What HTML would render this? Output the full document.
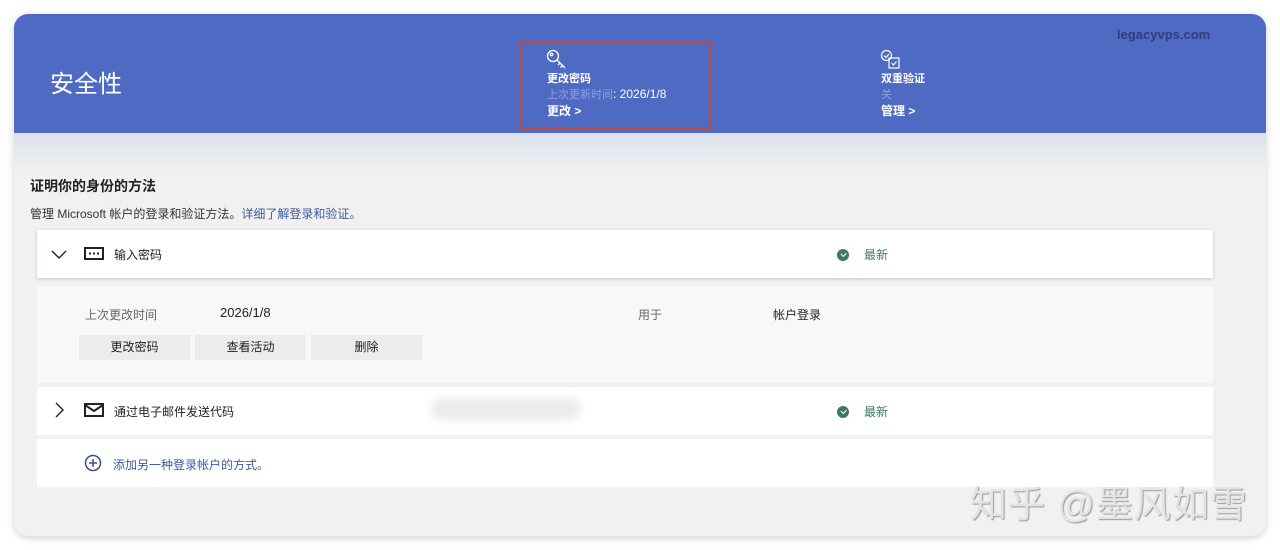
<!DOCTYPE html>
<html><head><meta charset="utf-8"><style>
*{margin:0;padding:0;box-sizing:border-box}
body{width:1280px;height:550px;background:#fff;font-family:"Liberation Sans","Noto Sans CJK SC",sans-serif;position:relative;overflow:hidden;color:#222}
.a{position:absolute;white-space:nowrap}
.card{position:absolute;left:14px;top:14px;width:1252px;height:522px;border-radius:14px;background:#f2f1f0;box-shadow:0 2px 8px rgba(0,0,0,.18);overflow:hidden}
.hdr{position:absolute;left:0;top:0;width:1252px;height:119px;background:#4f6ac3}
.grad{position:absolute;left:0;top:119px;width:1252px;height:40px;background:linear-gradient(#dde1ee,#f2f1f0)}
.w{position:absolute;background:#fff}
.btn{position:absolute;top:335px;height:25px;width:111px;background:#ececec;font-size:12px;text-align:center;line-height:25px;color:#222}
.chk{position:absolute;width:12px;height:12px;border-radius:50%;background:#3d7a62}
.chk:after{content:"";position:absolute;left:3.5px;top:3px;width:4px;height:2.5px;border-left:1.5px solid #fff;border-bottom:1.5px solid #fff;transform:rotate(-45deg)}
.new{font-size:12px;color:#3d7a62}
</style></head><body>
<div class="card">
<div class="hdr"></div>
<div class="grad"></div>
</div>
<div class="a" style="left:50px;top:64px;font-size:24px;color:#fff">安全性</div>
<div class="a" style="left:1117px;top:27px;font-size:13px;font-weight:bold;color:#2d3f7e">legacyvps.com</div>
<div class="a" style="left:520px;top:42px;width:192px;height:87px;border:2px solid #c0493a"></div>
<svg class="a" style="left:546px;top:49px" width="22" height="22" viewBox="0 0 22 22" fill="none" stroke="#fff" stroke-width="1.3"><circle cx="7" cy="7" r="5.5"/><circle cx="5.5" cy="5.5" r="1.2"/><path d="M11 11l8 8M14 14l-2 2M16.5 16.5l-2 2"/></svg>
<div class="a" style="left:547px;top:70px;font-size:11px;color:#fff;font-weight:bold">更改密码</div>
<div class="a" style="left:547px;top:86px;font-size:11px;color:#8ea0de">上次更新时间<span style="color:#fff;font-size:12px">: 2026/1/8</span></div>
<div class="a" style="left:547px;top:102px;font-size:12px;color:#fff;font-weight:bold">更改 &gt;</div>
<svg class="a" style="left:880px;top:49px" width="22" height="22" viewBox="0 0 22 22" fill="none" stroke="#fff" stroke-width="1.2"><circle cx="6.5" cy="6.5" r="5"/><path d="M4 6.5l2 2 3-3.5"/><rect x="9" y="9" width="10" height="10"/><path d="M11.5 14l2 2 3-3.5"/></svg>
<div class="a" style="left:881px;top:70px;font-size:11px;color:#fff;font-weight:bold">双重验证</div>
<div class="a" style="left:881px;top:86px;font-size:11px;color:#8ea0de">关</div>
<div class="a" style="left:881px;top:102px;font-size:12px;color:#fff;font-weight:bold">管理 &gt;</div>

<div class="a" style="left:30px;top:176px;font-size:14px;font-weight:bold;color:#222">证明你的身份的方法</div>
<div class="a" style="left:30px;top:205px;font-size:12px;color:#333">管理 Microsoft 帐户的登录和验证方法。<span style="color:#3a5ba8">详细了解登录和验证。</span></div>

<div class="w" style="left:37px;top:230px;width:1176px;height:48px;box-shadow:0 1px 3px rgba(0,0,0,.2)"></div>
<svg class="a" style="left:51px;top:248px" width="16" height="12" viewBox="0 0 16 12"><path d="M1 3l7 7 7-7" fill="none" stroke="#222" stroke-width="1.4"/></svg>
<svg class="a" style="left:84px;top:247px" width="20" height="13" viewBox="0 0 20 13"><rect x="1" y="1" width="18" height="11" fill="none" stroke="#222" stroke-width="2"/><rect x="5" y="5.5" width="2" height="2" fill="#222"/><rect x="9" y="5.5" width="2" height="2" fill="#222"/><rect x="13" y="5.5" width="2" height="2" fill="#222"/></svg>
<div class="a" style="left:114px;top:246px;font-size:12px">输入密码</div>
<div class="chk" style="left:837px;top:249px"></div>
<div class="a new" style="left:864px;top:246px">最新</div>

<div class="a" style="left:37px;top:286px;width:1176px;height:97px;background:#f8f8f8"></div>
<div class="a" style="left:85px;top:306px;font-size:12px;color:#666">上次更改时间</div>
<div class="a" style="left:220px;top:305px;font-size:13px;color:#222">2026/1/8</div>
<div class="a" style="left:638px;top:306px;font-size:12px;color:#666">用于</div>
<div class="a" style="left:773px;top:306px;font-size:12px;color:#222">帐户登录</div>
<div class="btn" style="left:79px">更改密码</div>
<div class="btn" style="left:195px">查看活动</div>
<div class="btn" style="left:311px">删除</div>

<div class="w" style="left:37px;top:387px;width:1176px;height:48px"></div>
<svg class="a" style="left:53px;top:402px" width="12" height="16" viewBox="0 0 12 16"><path d="M3 1l7 7-7 7" fill="none" stroke="#222" stroke-width="1.4"/></svg>
<svg class="a" style="left:84px;top:403px" width="20" height="14" viewBox="0 0 20 14" fill="none" stroke="#222" stroke-width="2"><rect x="1" y="1" width="18" height="12"/><path d="M1 2l9 6 9-6"/></svg>
<div class="a" style="left:114px;top:403px;font-size:12px">通过电子邮件发送代码</div>
<div class="a" style="left:432px;top:398px;width:148px;height:22px;background:#ececec;border-radius:8px;filter:blur(4px)"></div>
<div class="chk" style="left:837px;top:406px"></div>
<div class="a new" style="left:864px;top:403px">最新</div>

<div class="w" style="left:37px;top:439px;width:1176px;height:48px"></div>
<svg class="a" style="left:84px;top:454px" width="18" height="18" viewBox="0 0 18 18" fill="none" stroke="#3a5287" stroke-width="1.5"><circle cx="9" cy="9" r="7.5"/><path d="M9 5v8M5 9h8"/></svg>
<div class="a" style="left:113px;top:456px;font-size:12px;color:#3a5ba8">添加另一种登录帐户的方式。</div>

<div class="a" style="left:970px;top:474px;font-size:37px;letter-spacing:1px;color:#e4e4e4;text-shadow:1px 1px 1px #999">知乎 @墨风如雪</div>
</body></html>
